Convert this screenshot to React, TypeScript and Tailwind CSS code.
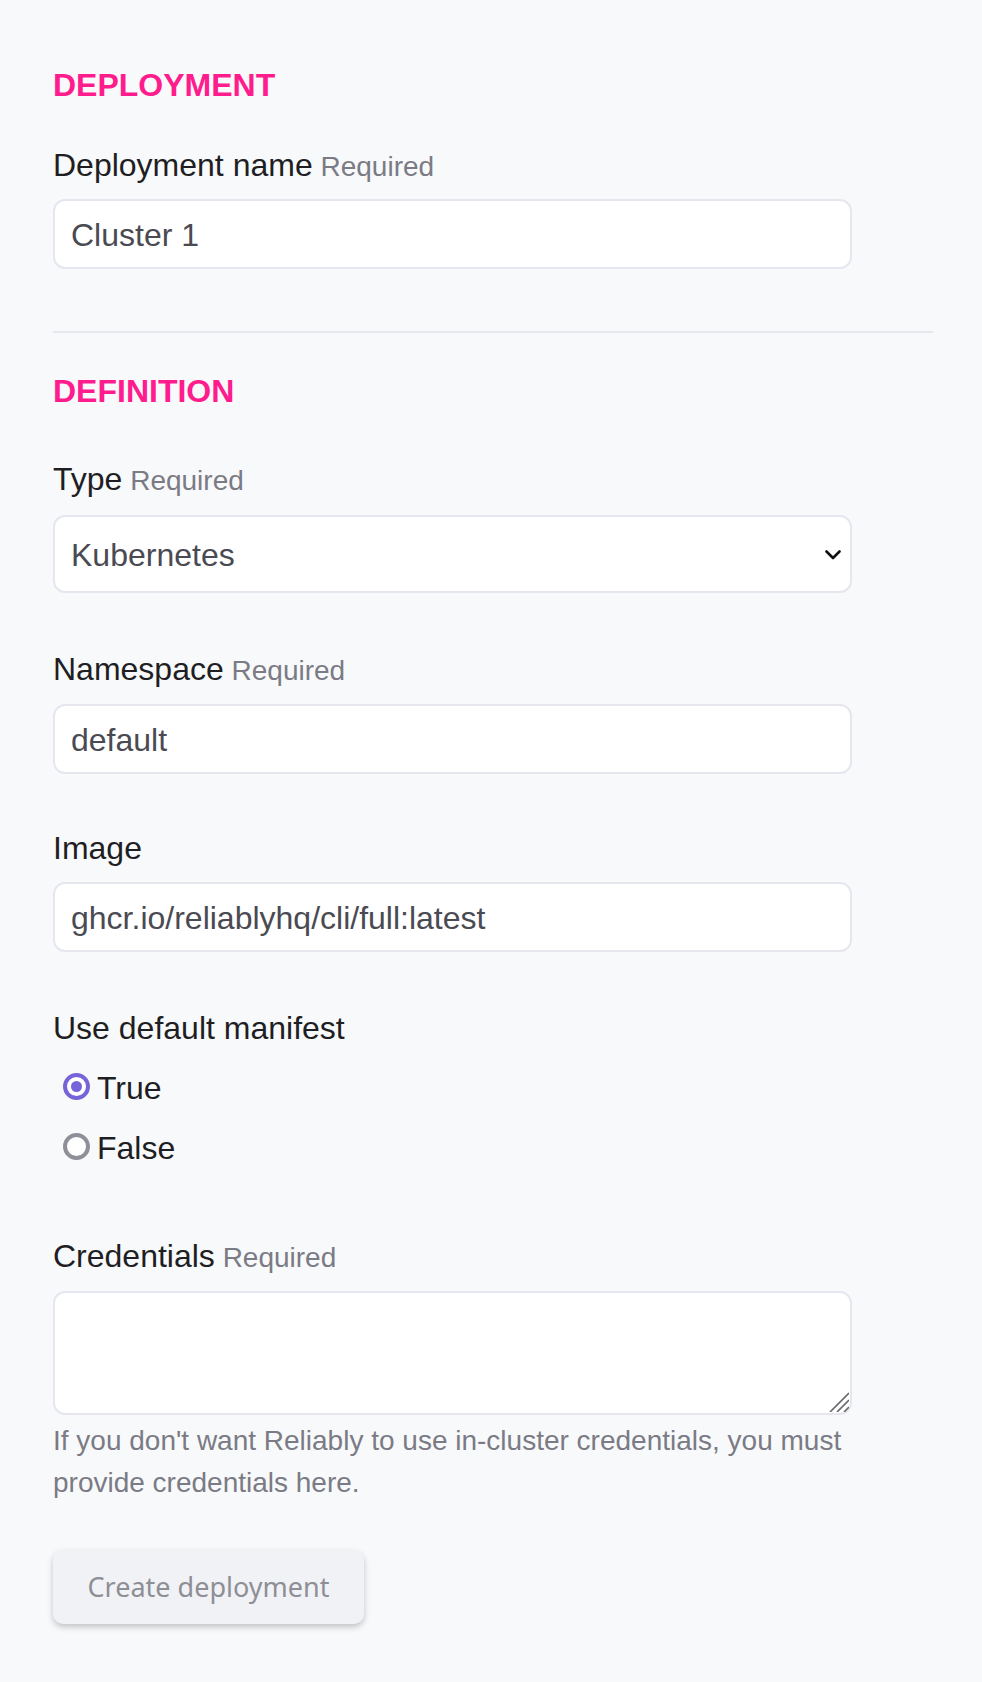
import React from 'react';

const Label: React.FC<{ text: string; required?: boolean }> = ({ text, required }) => (
  <div className="text-[32px] leading-[48px] text-[#1e1e23]">
    {text}
    {required && <span className="text-[28px] text-[#7b7b85]"> Required</span>}
  </div>
);

const TextInput: React.FC<{ value: string; className?: string }> = ({ value, className }) => (
  <input
    type="text"
    defaultValue={value}
    className={`block w-[799px] h-[70px] rounded-[12px] border-2 border-[#e6e6ef] bg-white px-[16px] pt-[2px] text-[32px] text-[#4a4a52] outline-none ${className ?? ''}`}
  />
);

const Heading: React.FC<{ children: React.ReactNode }> = ({ children }) => (
  <h2 className="text-[32px] leading-[48px] font-bold text-[#ff1c8d]">{children}</h2>
);

const App: React.FC = () => {
  return (
    <div
      className="min-h-screen bg-[#f8f9fb] pl-[53px] pr-[49px] pt-[61px] pb-[58px]"
      style={{ fontFamily: '"Liberation Sans", Arial, sans-serif' }}
    >
      {/* Deployment */}
      <Heading>DEPLOYMENT</Heading>
      <div className="mt-[32px]">
        <Label text="Deployment name" required />
        <TextInput value="Cluster 1" className="mt-[8px]" />
      </div>

      <div className="mt-[62px] h-[2px] bg-[#e7e8ee]" />

      {/* Definition */}
      <div className="mt-[34px]">
        <Heading>DEFINITION</Heading>
      </div>

      <div className="mt-[40px]">
        <Label text="Type" required />
        <div className="relative mt-[10px] w-[799px]">
          <select
            defaultValue="kubernetes"
            className="block w-full h-[78px] appearance-none rounded-[12px] border-2 border-[#e6e6ef] bg-white px-[16px] pt-[2px] text-[32px] text-[#4a4a52] outline-none"
          >
            <option value="kubernetes">Kubernetes</option>
          </select>
          <svg
            className="pointer-events-none absolute right-[11px] top-[35px]"
            width="16"
            height="10"
            viewBox="0 0 16 10"
            fill="none"
          >
            <path d="M1.5 1.5 L8 8 L14.5 1.5" stroke="#111" strokeWidth="2.6" strokeLinecap="round" strokeLinejoin="round" />
          </svg>
        </div>
      </div>

      <div className="mt-[52px]">
        <Label text="Namespace" required />
        <TextInput value="default" className="mt-[9px]" />
      </div>

      <div className="mt-[50px]">
        <Label text="Image" />
        <TextInput value="ghcr.io/reliablyhq/cli/full:latest" className="mt-[10px]" />
      </div>

      <div className="mt-[52px]">
        <Label text="Use default manifest" />
        <div className="mt-[12px] flex flex-col gap-[12px] pl-[10px]">
          <label className="flex items-center h-[48px] gap-[7px] text-[32px] text-[#1e1e23]">
            <span className="mb-[4px] flex h-[27px] w-[27px] items-center justify-center rounded-full border-[4px] border-[#7764d8] bg-white">
              <span className="h-[11px] w-[11px] rounded-full bg-[#7764d8]" />
            </span>
            True
          </label>
          <label className="flex items-center h-[48px] gap-[7px] text-[32px] text-[#1e1e23]">
            <span className="mb-[4px] h-[27px] w-[27px] rounded-full border-[4px] border-[#8f8f9a] bg-white" />
            False
          </label>
        </div>
      </div>

      <div className="mt-[60px]">
        <Label text="Credentials" required />
        <div className="relative mt-[9px] w-[799px]">
          <textarea className="block w-full h-[124px] resize-none rounded-[12px] border-2 border-[#e6e6ef] bg-white px-[16px] py-[10px] text-[32px] text-[#4a4a52] outline-none" />
          {/* resize grip */}
          <svg
            className="pointer-events-none absolute right-[3px] bottom-[3px]"
            width="20"
            height="20"
            viewBox="0 0 20 20"
            fill="none"
          >
            <path d="M1 20 L20 1 M8 20 L20 8 M15 20 L20 15" stroke="#6a6a6f" strokeWidth="1.7" />
          </svg>
        </div>
        <p className="mt-[5px] text-[28px] leading-[42px] text-[#7b7b85]">
          If you don't want Reliably to use in-cluster credentials, you must
          <br />
          provide credentials here.
        </p>
      </div>

      <button
        type="button"
        className="mt-[46px] h-[74px] w-[311px] rounded-[10px] bg-[#f1f2f5] text-[27px] text-[#8e8e96] shadow-[0_3px_6px_rgba(0,0,0,0.22)]"
        style={{ fontFamily: '"Noto Sans", "Open Sans", sans-serif' }}
      >
        Create deployment
      </button>
    </div>
  );
};

export default App;
